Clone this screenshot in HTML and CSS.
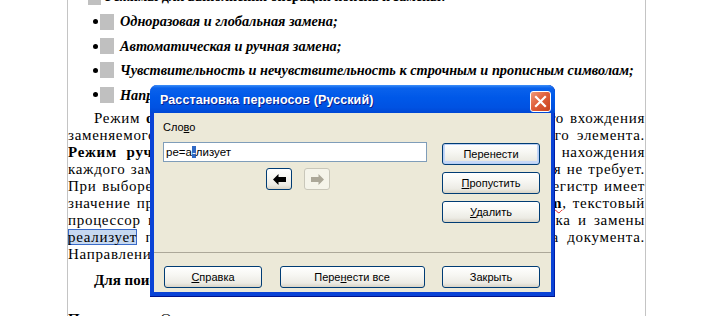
FILE: index.html
```html
<!DOCTYPE html>
<html lang="ru">
  <head>
    <meta charset="UTF-8" />
    <title>Расстановка переносов</title>
    <link rel="stylesheet" href="styles.css">
  </head>
  <body>
    <!-- Document page behind the dialog -->
    <div class="doc">
      <p class="lead-item"><span class="sq"></span><b>Режимы для выполнения операции поиска и замены:</b></p>
      <ul class="modes">
        <li><span class="sq"></span><em>Одноразовая и глобальная замена;</em></li>
        <li><span class="sq"></span><em>Автоматическая и ручная замена;</em></li>
        <li><span class="sq"></span><em>Чувствительность и нечувствительность к строчным и прописным символам;</em></li>
        <li><span class="sq"></span><em>Направление поиска.</em></li>
      </ul>
      <div class="para">
        <span class="ln first">Режим <b>одноразовой замены</b> требует подтверждения для каждого вхождения</span>
        <span class="ln">заменяемого текста, а глобальная – без подтверждения заменяемого элемента.</span>
        <span class="ln"><b>Режим ручной замены</b> предполагает остановку процесса после нахождения</span>
        <span class="ln">каждого заменяемого слова, автоматический режим – подтверждения не требует.</span>
        <span class="ln">При выборе режима различения строчных и прописных символов регистр имеет</span>
        <span class="ln">значение при поиске. При установке флажка учета регистра <b class="typo">Custom</b>, текстовый</span>
        <span class="ln">процессор игнорирует регистр символов, выполняя операции поиска и замены</span>
        <span class="ln"><span class="found">реализует</span> поиск от позиции курсора в сторону начала или конца документа.</span>
        <span class="ln last">Направление поиска задается в соответствующем поле.</span>
      </div>
      <p class="sub"><b>Для поиска и замены фрагмента текста необходимо:</b></p>
      <p class="note"><b>Примечание.</b> Операции выполняются в диалоговом окне.</p>
    </div>

    <!-- Hyphenation dialog -->
    <div class="dialog">
      <div class="titlebar">
        <span class="title">Расстановка переносов (Русский)</span>
        <button class="close-btn">
          <svg width="13" height="13" viewBox="0 0 13 13">
            <path d="M2 2 L11 11 M11 2 L2 11" stroke="#fff" stroke-width="2.2" stroke-linecap="square" />
          </svg>
        </button>
      </div>
      <div class="dialog-body">
        <div class="dialog-main">
          <div class="word-col">
            <label class="word-label">Сло<u>в</u>о</label>
            <div class="word-input">ре=а<span class="sel">-</span>лизует</div>
            <div class="arrows">
              <button class="btn arrow-btn">
                <svg width="13" height="11" viewBox="0 0 13 11"><path d="M0 5.5 L5.5 0 V3 H13 V8 H5.5 V11 Z" fill="#000" /></svg>
              </button>
              <button class="btn arrow-btn disabled">
                <svg width="13" height="11" viewBox="0 0 13 11"><path d="M13 5.5 L7.5 0 V3 H0 V8 H7.5 V11 Z" fill="#aca899" /></svg>
              </button>
            </div>
          </div>
          <div class="btn-col">
            <button class="btn default">Перенести</button>
            <button class="btn"><u>П</u>ропустить</button>
            <button class="btn"><u>У</u>далить</button>
          </div>
        </div>
        <div class="dialog-footer">
          <button class="btn"><u>С</u>правка</button>
          <button class="btn wide">Пере<u>н</u>ести все</button>
          <button class="btn">Закрыть</button>
        </div>
      </div>
    </div>
  </body>
</html>
```

FILE: styles.css
```css
body {
  margin: 0;
  background: #fff;
  font-family: "Liberation Serif", serif;
  position: relative;
  height: 316px;
  overflow: hidden;
}

/* Document page */
.doc {
  margin-left: 67px;
  width: 577px;
  height: 316px;
  border-left: 1px solid #c4c4c4;
  border-right: 1px solid #c4c4c4;
  overflow: hidden;
  color: #000;
}
.lead-item {
  margin: -15px 0 0 0;
  display: flex;
  align-items: center;
  padding-left: 20px;
  font-size: 14px;
  line-height: 24.4px;
}
.sq {
  display: inline-block;
  width: 14px;
  height: 16px;
  background: #c0c0c0;
  margin-right: 6px;
  flex: none;
}
.lead-item .sq {
  width: 13px;
  margin-right: 4px;
}
.modes {
  list-style: none;
  margin: 0;
  padding: 0;
  font-size: 14.3px;
  line-height: 24.4px;
}
.modes li {
  display: flex;
  align-items: center;
  padding-left: 25px;
  white-space: nowrap;
}
.modes li::before {
  content: "";
  width: 5px;
  height: 5px;
  border-radius: 50%;
  background: #000;
  margin-right: 2px;
}
.modes em {
  font-weight: bold;
}
.para {
  margin-top: 3px;
  font-size: 15px;
  line-height: 17px;
  letter-spacing: 0.7px;
}
.ln {
  display: block;
  text-align: justify;
  text-align-last: justify;
}
.ln.first {
  text-indent: 26px;
}
.ln.last {
  text-align-last: left;
}
.found {
  background: #c6d8f0;
  box-shadow: inset 0 0 0 1px #3a6bc9;
}
.typo {
  text-decoration: underline wavy #e02020;
  text-decoration-thickness: 1px;
}
.sub {
  margin: 9px 0 0 0;
  text-indent: 26px;
  font-size: 15px;
  line-height: 17px;
}
.note {
  margin: 22px 0 0 0;
  font-size: 15px;
  line-height: 17px;
}

/* Dialog window */
.dialog {
  position: absolute;
  left: 150px;
  top: 85px;
  width: 405px;
  height: 212px;
  box-sizing: border-box;
  display: flex;
  flex-direction: column;
  background: #0a43d6;
  border-radius: 7px 7px 0 0;
  box-shadow: inset 0 -1px 0 #00138c, inset -1px 0 0 #001ea8;
  font-family: "Liberation Sans", Arial, sans-serif;
  font-size: 11px;
}
.titlebar {
  height: 28px;
  display: flex;
  align-items: center;
  padding: 2px 4px 0 10px;
  box-sizing: border-box;
  border-radius: 7px 7px 0 0;
  background: linear-gradient(to bottom, #3d8ff8 0, #0a62ec 3px, #0058e8 45%, #0052e2 80%, #0047d4 100%);
}
.title {
  flex: 1;
  color: #fff;
  font-weight: bold;
  font-size: 12.5px;
  text-shadow: 1px 1px 0 #0a1e8c;
  letter-spacing: 0.1px;
}
.close-btn {
  width: 21px;
  height: 21px;
  padding: 0;
  border: 1px solid #fff;
  border-radius: 3px;
  background: linear-gradient(135deg, #f09a7a 0, #e0603c 45%, #c8401c 100%);
  display: flex;
  align-items: center;
  justify-content: center;
  margin-top: 2px;
}
.dialog-body {
  flex: 1;
  margin: 0 4px 5px 4px;
  background: #ece9d8;
  display: flex;
  flex-direction: column;
}
.dialog-main {
  height: 139px;
  box-sizing: border-box;
  padding: 7px 11px 0 9px;
  display: flex;
  gap: 15px;
}
.word-col {
  width: 264px;
  display: flex;
  flex-direction: column;
}
.word-label {
  line-height: 14px;
  height: 14px;
  margin-bottom: 8px;
}
.word-input {
  height: 20px;
  box-sizing: border-box;
  border: 1px solid #7f9db9;
  background: #fff;
  padding: 0 2px;
  line-height: 18px;
  font-size: 11.5px;
}
.sel {
  background: #316ac5;
  color: #fff;
}
.arrows {
  display: flex;
  justify-content: center;
  gap: 12px;
  margin-top: 6px;
  padding-left: 6px;
}
.btn-col {
  width: 98px;
  padding-top: 23px;
  display: flex;
  flex-direction: column;
  gap: 7px;
}
.btn {
  height: 22px;
  width: 98px;
  padding: 0;
  border: 1px solid #003c74;
  border-radius: 3px;
  background: linear-gradient(to bottom, #ffffff 0, #f7f7f3 40%, #ecebe4 80%, #d8d3c6 100%);
  font-family: "Liberation Sans", Arial, sans-serif;
  font-size: 11px;
  color: #000;
}
.btn.default {
  box-shadow: inset 0 0 0 1px #b8cff5, inset 0 -1px 0 2px #c6d8f7;
}
.btn.wide {
  width: 145px;
}
.arrow-btn {
  width: 26px;
  display: flex;
  align-items: center;
  justify-content: center;
}
.arrow-btn.disabled {
  border-color: #c9c7ba;
  background: #f5f4ea;
}
.dialog-footer {
  flex: 1;
  border-top: 1px solid #aca899;
  padding: 13px 11px 0 10px;
  display: flex;
  justify-content: space-between;
  align-items: flex-start;
}
```
